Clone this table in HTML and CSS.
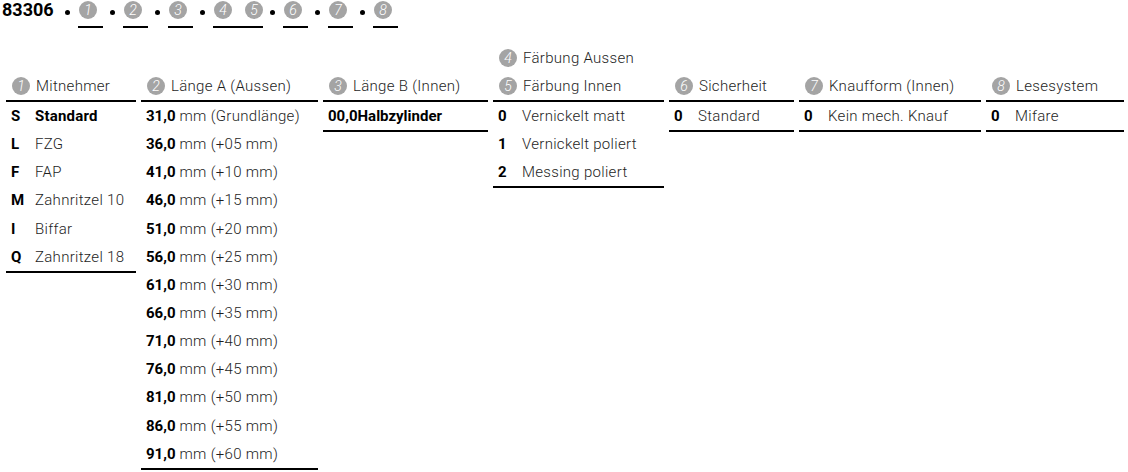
FILE: index.html
```html
<!DOCTYPE html>
<html lang="de">
<head>
<meta charset="utf-8">
<title>83306</title>
<link rel="stylesheet" href="styles.css">
</head>
<body>
<div class="title">
  <span class="code">83306</span>
  <span class="dot dot-first"></span>
  <span class="slot"><span class="badge">1</span></span>
  <span class="dot"></span>
  <span class="slot"><span class="badge">2</span></span>
  <span class="dot"></span>
  <span class="slot"><span class="badge">3</span></span>
  <span class="dot"></span>
  <span class="slot slot-wide"><span class="badge">4</span><span class="badge">5</span></span>
  <span class="dot"></span>
  <span class="slot"><span class="badge">6</span></span>
  <span class="dot"></span>
  <span class="slot"><span class="badge">7</span></span>
  <span class="dot"></span>
  <span class="slot"><span class="badge">8</span></span>
</div>

<div class="grid">
  <div class="head"><div class="hl"><span class="badge sm">1</span>Mitnehmer</div></div>
  <div class="head"><div class="hl"><span class="badge sm">2</span>Länge A (Aussen)</div></div>
  <div class="head"><div class="hl"><span class="badge sm">3</span>Länge B (Innen)</div></div>
  <div class="head"><div class="hl"><span class="badge sm">4</span>Färbung Aussen</div><div class="hl"><span class="badge sm">5</span>Färbung Innen</div></div>
  <div class="head"><div class="hl"><span class="badge sm">6</span>Sicherheit</div></div>
  <div class="head"><div class="hl"><span class="badge sm">7</span>Knaufform (Innen)</div></div>
  <div class="head"><div class="hl"><span class="badge sm">8</span>Lesesystem</div></div>

  <div class="list">
    <div class="row"><b class="k">S</b><b class="v">Standard</b></div>
    <div class="row"><b class="k">L</b><span class="v">FZG</span></div>
    <div class="row"><b class="k">F</b><span class="v">FAP</span></div>
    <div class="row"><b class="k">M</b><span class="v">Zahnritzel 10</span></div>
    <div class="row"><b class="k">I</b><span class="v">Biffar</span></div>
    <div class="row"><b class="k">Q</b><span class="v">Zahnritzel 18</span></div>
  </div>
  <div class="list">
    <div class="row"><b>31,0</b><span class="mm">mm (Grundlänge)</span></div>
    <div class="row"><b>36,0</b><span class="mm">mm (+05 mm)</span></div>
    <div class="row"><b>41,0</b><span class="mm">mm (+10 mm)</span></div>
    <div class="row"><b>46,0</b><span class="mm">mm (+15 mm)</span></div>
    <div class="row"><b>51,0</b><span class="mm">mm (+20 mm)</span></div>
    <div class="row"><b>56,0</b><span class="mm">mm (+25 mm)</span></div>
    <div class="row"><b>61,0</b><span class="mm">mm (+30 mm)</span></div>
    <div class="row"><b>66,0</b><span class="mm">mm (+35 mm)</span></div>
    <div class="row"><b>71,0</b><span class="mm">mm (+40 mm)</span></div>
    <div class="row"><b>76,0</b><span class="mm">mm (+45 mm)</span></div>
    <div class="row"><b>81,0</b><span class="mm">mm (+50 mm)</span></div>
    <div class="row"><b>86,0</b><span class="mm">mm (+55 mm)</span></div>
    <div class="row"><b>91,0</b><span class="mm">mm (+60 mm)</span></div>
  </div>
  <div class="list">
    <div class="row"><b>00,0Halbzylinder</b></div>
  </div>
  <div class="list">
    <div class="row"><b class="k">0</b><span class="v">Vernickelt matt</span></div>
    <div class="row"><b class="k">1</b><span class="v">Vernickelt poliert</span></div>
    <div class="row"><b class="k">2</b><span class="v">Messing poliert</span></div>
  </div>
  <div class="list">
    <div class="row"><b class="k">0</b><span class="v">Standard</span></div>
  </div>
  <div class="list">
    <div class="row"><b class="k">0</b><span class="v">Kein mech. Knauf</span></div>
  </div>
  <div class="list">
    <div class="row"><b class="k">0</b><span class="v">Mifare</span></div>
  </div>
</div>
</body>
</html>
```

FILE: styles.css
```css
html, body {
  margin: 0;
  padding: 0;
  background: #fff;
}

body {
  font-family: Roboto, "Liberation Sans", sans-serif;
  font-weight: 300;
  font-size: 15px;
  color: #1e1e1e;
}

b {
  font-weight: 700;
  color: #000;
}

.title {
  display: flex;
  align-items: flex-start;
  height: 28px;
  padding-left: 2px;
}

.code {
  font-weight: 700;
  font-size: 18px;
  line-height: 20px;
  color: #000;
  width: 53px;
}

.dot {
  width: 5px;
  height: 5px;
  border-radius: 50%;
  background: #000;
  margin: 10px 8px 0 7px;
}

.dot-first {
  margin-left: 10px;
}

.slot {
  display: flex;
  gap: 13px;
  padding: 1px 6px 7px 1px;
  border-bottom: 2px solid #000;
}

.slot-wide {
  padding-right: 0;
}

.badge {
  flex: none;
  width: 18px;
  height: 18px;
  border-radius: 50%;
  background: #a4a4a4;
  color: #fff;
  font-style: italic;
  font-weight: 300;
  font-size: 14px;
  line-height: 18px;
  text-align: center;
  letter-spacing: 0;
}

.badge.sm {
  margin-right: 6px;
}

.grid {
  display: grid;
  grid-template-columns: 130px 177px 165px 171px 125px 182px 138px;
  column-gap: 5px;
  margin-top: 16px;
  margin-left: 6px;
}

.head {
  align-self: end;
  border-bottom: 2px solid #000;
  padding-left: 6px;
}

.hl {
  display: flex;
  align-items: center;
  height: 28px;
  white-space: nowrap;
  letter-spacing: 0.3px;
}

.list {
  align-self: start;
  border-bottom: 2px solid #000;
  padding-left: 5px;
}

.row {
  display: flex;
  align-items: center;
  height: 28.15px;
  white-space: nowrap;
}

.k {
  width: 24px;
  flex: none;
}

.v {
  letter-spacing: 0.3px;
}

b.v {
  letter-spacing: 0.2px;
}

.mm {
  margin-left: 4px;
  letter-spacing: 0.3px;
}
```
